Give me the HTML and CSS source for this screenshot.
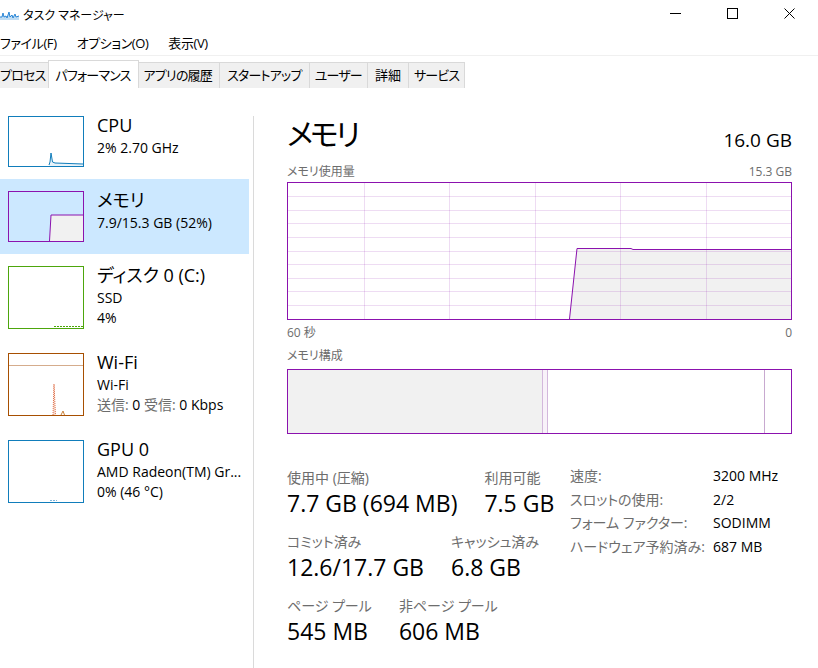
FILE: index.html
```html
<!DOCTYPE html>
<html lang="ja">

<head>
    <meta charset="UTF-8">
    <title>タスク マネージャー</title>
    <link rel="stylesheet" href="styles.css">
</head>

<body>
    <div class="ventana">
        <!-- barra de título -->
        <div class="barraTitulo">
            <svg class="icono" width="19" height="9" viewBox="0 0 19 9">
                <polygon points="0,9 0,6 2,6 3,2 4,6 6,5 7,7 9,1 10,6 12,4 13,7 15,3 16,6 19,5 19,9" fill="#bfdcf3" />
                <polyline points="0,6 2,6 3,2 4,6 6,5 7,7 9,1 10,6 12,4 13,7 15,3 16,6 19,5" fill="none" stroke="#2a86d6" stroke-width="1" />
            </svg>
            <span class="titulo">タスク マネージャー</span>
            <div class="controles">
                <span class="boton"><svg width="11" height="11" viewBox="0 0 11 11"><line x1="0" y1="5.5" x2="11" y2="5.5" stroke="#000" /></svg></span>
                <span class="boton"><svg width="11" height="11" viewBox="0 0 11 11"><rect x="0.5" y="0.5" width="10" height="10" fill="none" stroke="#000" /></svg></span>
                <span class="boton"><svg width="11" height="11" viewBox="0 0 11 11"><path d="M0.5 0.5 L10.5 10.5 M10.5 0.5 L0.5 10.5" stroke="#000" /></svg></span>
            </div>
        </div>

        <!-- menú -->
        <div class="menu">
            <span>ファイル(F)</span>
            <span>オプション(O)</span>
            <span>表示(V)</span>
        </div>

        <!-- pestañas -->
        <div class="pestanas">
            <span class="pestana primera">プロセス</span>
            <span class="pestana activa">パフォーマンス</span>
            <span class="pestana ancha">アプリの履歴</span>
            <span class="pestana ancha">スタートアップ</span>
            <span class="pestana">ユーザー</span>
            <span class="pestana kanji">詳細</span>
            <span class="pestana">サービス</span>
        </div>

        <div class="contenido">
            <!-- lista lateral de recursos -->
            <div class="lateral">
                <div class="recurso">
                    <div class="mini cpu">
                        <svg viewBox="0 0 74 49" preserveAspectRatio="none">
                            <polygon points="40,49 41,45 42,36 43.5,45 46,46 60,46.5 74,47 74,49" fill="#e8f2f9" />
                            <polyline points="40,48 41,45 42,36 43.5,45 46,46 60,46.5 74,47" fill="none" stroke="#117dbb" stroke-width="1" />
                        </svg>
                    </div>
                    <div class="info">
                        <div class="nombre">CPU</div>
                        <div class="dato">2% 2.70 GHz</div>
                    </div>
                </div>

                <div class="recurso seleccionado">
                    <div class="mini memoria">
                        <svg viewBox="0 0 74 49" preserveAspectRatio="none">
                            <polygon points="40.5,49 42,23 74,23 74,49" fill="#f1f1f1" />
                            <polyline points="40.5,49 42,23 74,23" fill="none" stroke="#8b12ae" stroke-width="1" />
                        </svg>
                    </div>
                    <div class="info">
                        <div class="nombre">メモリ</div>
                        <div class="dato">7.9/15.3 GB (52%)</div>
                    </div>
                </div>

                <div class="recurso">
                    <div class="mini alto disco">
                        <svg viewBox="0 0 74 61" preserveAspectRatio="none">
                            <line x1="45" y1="59.5" x2="74" y2="59.5" stroke="#4da60c" stroke-width="1" stroke-dasharray="2 1" />
                        </svg>
                    </div>
                    <div class="info">
                        <div class="nombre">ディスク 0 (C:)</div>
                        <div class="dato">SSD</div>
                        <div class="dato">4%</div>
                    </div>
                </div>

                <div class="recurso">
                    <div class="mini alto wifi">
                        <svg viewBox="0 0 74 61" preserveAspectRatio="none">
                            <line x1="0" y1="11.5" x2="74" y2="11.5" stroke="#d5ac8c" stroke-width="1" />
                            <polygon points="44,61 45,30 46.5,61" fill="#f6d9cc" />
                            <polyline points="44,61 45,30 46.5,61" fill="none" stroke="#e0704a" stroke-width="1" stroke-dasharray="1 1" />
                            <polyline points="52,61 54,57 55.5,61" fill="none" stroke="#c8823c" stroke-width="1" />
                        </svg>
                    </div>
                    <div class="info">
                        <div class="nombre">Wi-Fi</div>
                        <div class="dato">Wi-Fi</div>
                        <div class="dato"><span class="gris">送信:</span> 0 <span class="gris">受信:</span> 0 Kbps</div>
                    </div>
                </div>

                <div class="recurso">
                    <div class="mini alto gpu">
                        <svg viewBox="0 0 74 61" preserveAspectRatio="none">
                            <line x1="41" y1="59.5" x2="48" y2="59.5" stroke="#7fb6dc" stroke-width="1" stroke-dasharray="2 1" />
                        </svg>
                    </div>
                    <div class="info">
                        <div class="nombre">GPU 0</div>
                        <div class="dato">AMD Radeon(TM) Gr...</div>
                        <div class="dato">0% (46 °C)</div>
                    </div>
                </div>
            </div>

            <div class="divisor"></div>

            <!-- panel de memoria -->
            <div class="panel">
                <div class="cabecera">
                    <span class="tituloGrande">メモリ</span>
                    <span class="capacidad">16.0 GB</span>
                </div>

                <div class="fila etiqueta">
                    <span>メモリ使用量</span>
                    <span>15.3 GB</span>
                </div>
                <div class="grafico">
                    <svg width="503" height="136" viewBox="0 0 503 136">
                        <polygon points="281.5,136 289,65.5 343,65.5 345,66.5 503,66.5 503,136" fill="#f1f1f1" />
                        <g stroke="#8b12ae" stroke-opacity="0.15" stroke-width="1">
                            <line x1="76.5" y1="0" x2="76.5" y2="136" />
                            <line x1="161.5" y1="0" x2="161.5" y2="136" />
                            <line x1="247.5" y1="0" x2="247.5" y2="136" />
                            <line x1="332.5" y1="0" x2="332.5" y2="136" />
                            <line x1="418.5" y1="0" x2="418.5" y2="136" />
                            <line x1="0" y1="13.5" x2="503" y2="13.5" />
                            <line x1="0" y1="27.5" x2="503" y2="27.5" />
                            <line x1="0" y1="40.5" x2="503" y2="40.5" />
                            <line x1="0" y1="54.5" x2="503" y2="54.5" />
                            <line x1="0" y1="68.5" x2="503" y2="68.5" />
                            <line x1="0" y1="81.5" x2="503" y2="81.5" />
                            <line x1="0" y1="95.5" x2="503" y2="95.5" />
                            <line x1="0" y1="108.5" x2="503" y2="108.5" />
                            <line x1="0" y1="122.5" x2="503" y2="122.5" />
                        </g>
                        <polyline points="281.5,136 289,65.5 343,65.5 345,66.5 503,66.5" fill="none" stroke="#8b12ae" stroke-width="1" />
                    </svg>
                </div>
                <div class="fila etiqueta eje">
                    <span>60 秒</span>
                    <span>0</span>
                </div>

                <div class="fila etiqueta rotulo">
                    <span>メモリ構成</span>
                </div>
                <div class="composicion">
                    <div class="enUso"></div>
                    <div class="modificada"></div>
                    <div class="espera"></div>
                    <div class="libre"></div>
                </div>

                <!-- valores -->
                <div class="estadisticas">
                    <div class="bloques">
                        <div class="renglon">
                            <div class="valor">
                                <div class="etq">使用中 (圧縮)</div>
                                <div class="num">7.7 GB (694 MB)</div>
                            </div>
                            <div class="valor">
                                <div class="etq">利用可能</div>
                                <div class="num">7.5 GB</div>
                            </div>
                        </div>
                        <div class="renglon">
                            <div class="valor">
                                <div class="etq">コミット済み</div>
                                <div class="num">12.6/17.7 GB</div>
                            </div>
                            <div class="valor">
                                <div class="etq">キャッシュ済み</div>
                                <div class="num">6.8 GB</div>
                            </div>
                        </div>
                        <div class="renglon">
                            <div class="valor">
                                <div class="etq">ページ プール</div>
                                <div class="num">545 MB</div>
                            </div>
                            <div class="valor">
                                <div class="etq">非ページ プール</div>
                                <div class="num">606 MB</div>
                            </div>
                        </div>
                    </div>
                    <table class="detalles">
                        <tr><td>速度:</td><td>3200 MHz</td></tr>
                        <tr><td>スロットの使用:</td><td>2/2</td></tr>
                        <tr><td>フォーム ファクター:</td><td>SODIMM</td></tr>
                        <tr><td>ハードウェア予約済み:</td><td>687 MB</td></tr>
                    </table>
                </div>
            </div>
        </div>
    </div>
</body>

</html>
```

FILE: styles.css
```css
/*aspectos generales*/
* {
    box-sizing: border-box;
}

body {
    margin: 0;
    background-color: white;
    color: black;
    font-family: "Open Sans", "Noto Sans CJK JP", sans-serif;
    font-feature-settings: "palt";
}

.ventana {
    width: 818px;
    height: 668px;
    overflow: hidden;
}

/*barra de título*/
.barraTitulo {
    display: flex;
    align-items: center;
    height: 30px;
    font-size: 12px;
}

.barraTitulo .icono {
    margin: 1px 4px 0 0;
}

.controles {
    display: flex;
    align-self: flex-start;
    margin-left: auto;
}

.controles .boton {
    display: flex;
    align-items: center;
    justify-content: center;
    width: 57px;
    height: 27px;
}

/*menú*/
.menu {
    display: flex;
    gap: 20px;
    align-items: center;
    height: 26px;
    font-size: 13px;
    letter-spacing: -0.4px;
    border-bottom: 1px solid #f0f0f0;
}

/*pestañas*/
.pestanas {
    display: flex;
    align-items: flex-end;
    height: 32px;
    font-size: 13px;
    letter-spacing: -0.8px;
}

.pestana {
    height: 26px;
    padding: 0 5px;
    line-height: 24px;
    background-color: #f0f0f0;
    border: 1px solid #d9d9d9;
    border-bottom: none;
    margin-right: -1px;
}

.pestana.primera {
    margin-left: -1px;
    padding: 0 4px 0 0;
}

.pestana.ancha {
    padding: 0 7px;
}

.pestana.kanji {
    padding: 0 7px;
    letter-spacing: 0;
}

.pestana.activa {
    position: relative;
    height: 28px;
    padding: 0 7px;
    margin: 0 -3px 0 -2px;
    line-height: 28px;
    background-color: white;
    z-index: 1;
}

/*contenido*/
.contenido {
    display: flex;
    height: 580px;
}

.lateral {
    width: 249px;
    padding-top: 16px;
}

.recurso {
    display: flex;
    gap: 13px;
    padding: 12px 0 12px 8px;
}

.recurso.seleccionado {
    background-color: #cce8ff;
}

.mini {
    width: 76px;
    height: 51px;
    border: 1px solid;
}

.mini.alto {
    height: 63px;
}

.mini svg {
    display: block;
    width: 100%;
    height: 100%;
}

.cpu, .gpu {
    border-color: #117dbb;
}

.memoria {
    border-color: #8b12ae;
}

.disco {
    border-color: #4da60c;
}

.wifi {
    border-color: #a74f01;
}

.info .nombre {
    font-size: 18px;
    line-height: 18px;
    margin-bottom: 4px;
    white-space: nowrap;
}

.info .dato {
    font-size: 14px;
    line-height: 20px;
    white-space: nowrap;
}

.gris {
    color: #6d6d6d;
}

.divisor {
    width: 1px;
    margin: 28px 0 0 4px;
    background-color: #dadada;
}

/*panel principal*/
.panel {
    width: 564px;
    padding: 22px 26px 0 33px;
}

.cabecera {
    display: flex;
    justify-content: space-between;
    align-items: flex-end;
    height: 52px;
}

.tituloGrande {
    font-size: 30px;
    line-height: 40px;
    letter-spacing: -3px;
    margin-bottom: 8px;
}

.capacidad {
    font-size: 19px;
    line-height: 24px;
    margin-bottom: 10px;
}

.fila {
    display: flex;
    justify-content: space-between;
}

.etiqueta {
    font-size: 12px;
    line-height: 16px;
    color: #6d6d6d;
    margin-top: 2px;
    margin-bottom: 2px;
}

.eje {
    margin-top: 5px;
    margin-bottom: 7px;
}

.rotulo {
    margin-bottom: 5px;
}

.grafico {
    width: 505px;
    height: 138px;
    border: 1px solid #8b12ae;
}

.grafico svg {
    display: block;
}

.composicion {
    display: flex;
    width: 505px;
    height: 65px;
    border: 1px solid #8b12ae;
}

.enUso {
    width: 254px;
    background-color: #f1f1f1;
}

.modificada {
    width: 6px;
    background-color: #f8f2f9;
    border-left: 1px solid #d3b8dc;
    border-right: 1px solid #d3b8dc;
}

.espera {
    width: 217px;
    border-right: 1px solid #c8a9d0;
}

.libre {
    flex: 1;
}

/*valores numéricos*/
.estadisticas {
    display: flex;
    align-items: flex-start;
    margin-top: 34px;
}

.bloques {
    width: 283px;
}

.renglon {
    display: flex;
    gap: 27px;
    margin-bottom: 14px;
}

.valor .etq {
    font-size: 14px;
    line-height: 20px;
    color: #6d6d6d;
    white-space: nowrap;
}

.valor .num {
    font-size: 23px;
    line-height: 30px;
    white-space: nowrap;
}

.detalles {
    border-collapse: collapse;
    font-size: 14px;
    margin-top: -2px;
}

.detalles td {
    padding: 0;
    height: 23.5px;
    line-height: 20px;
    vertical-align: top;
}

.detalles td:first-child {
    width: 143px;
    color: #6d6d6d;
}
```
